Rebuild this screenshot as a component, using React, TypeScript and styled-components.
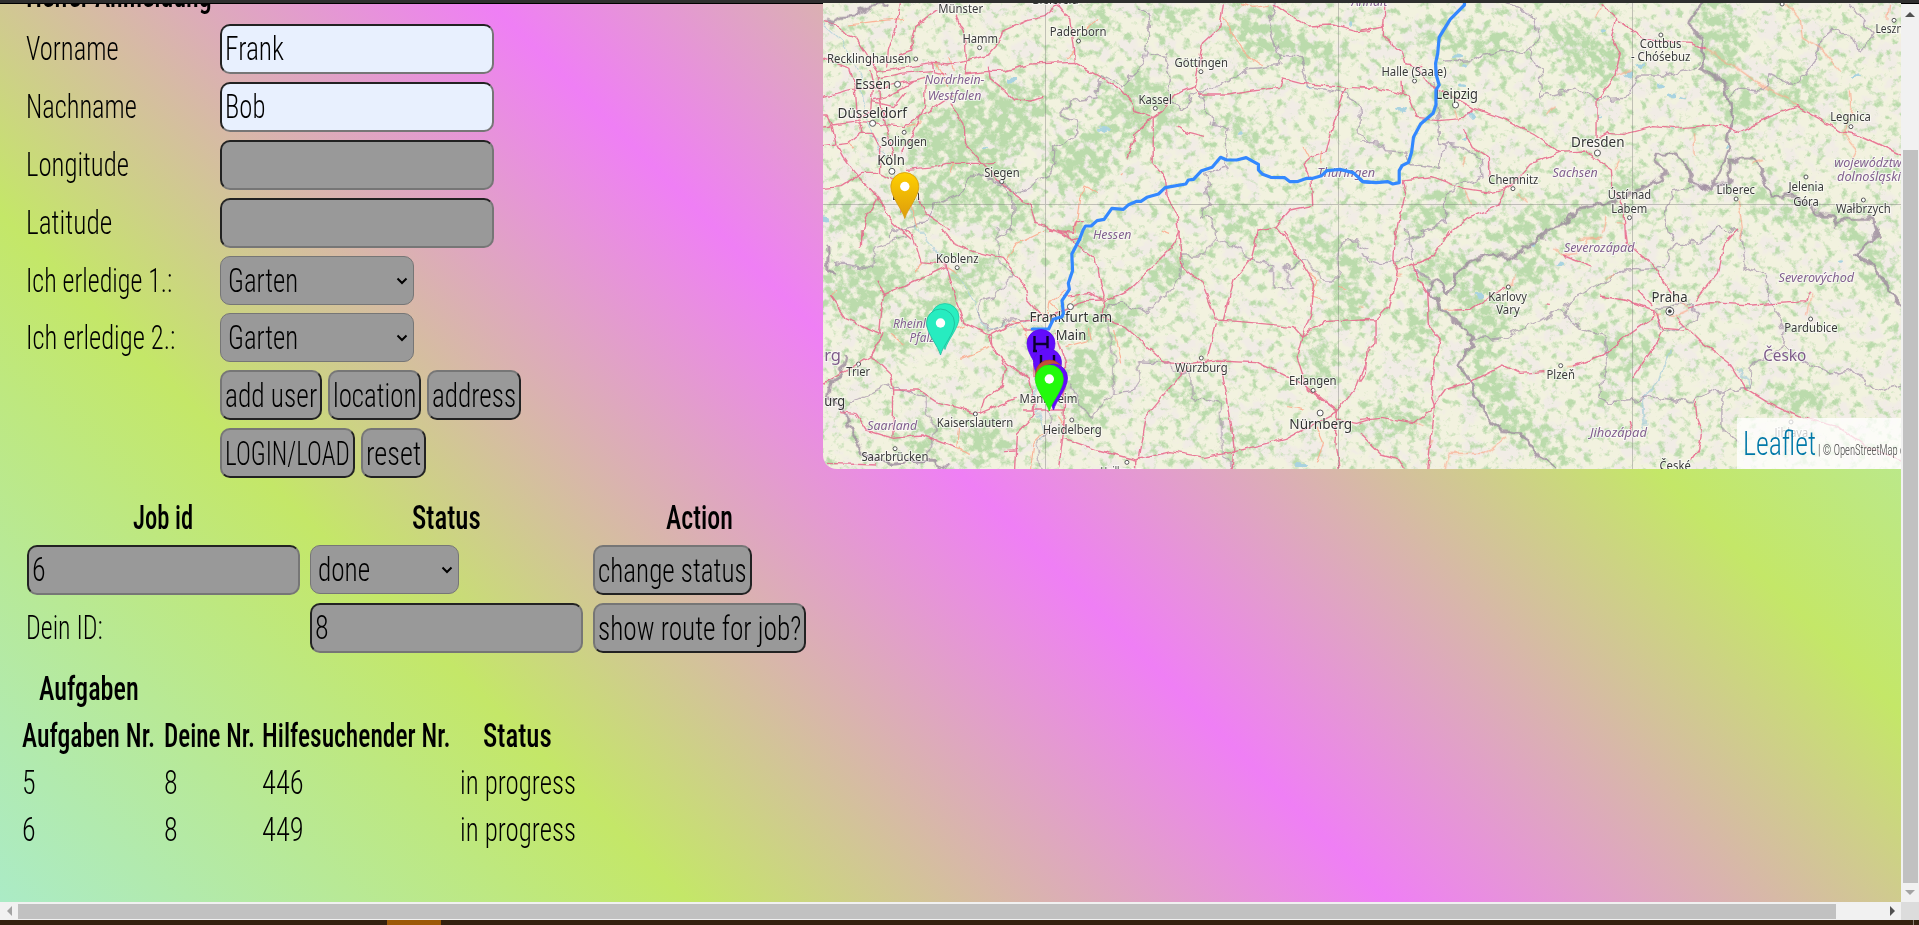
import React, { useLayoutEffect, useRef, useState } from "react";
import styled, { createGlobalStyle, css } from "styled-components";

const GlobalStyle = createGlobalStyle`
  * { box-sizing: border-box; }
  html, body { margin: 0; padding: 0; overflow: hidden; }
  body { font-family: Roboto, "Liberation Sans", sans-serif; color: #000; }
`;

/* ---------- condensed text ---------- */

const FitBox = styled.span<{ $w: number }>`
  display: inline-block;
  flex: none;
  width: ${(p) => p.$w}px;
  height: 40px;
  line-height: 38px;
  white-space: nowrap;
`;
const FitText = styled.span<{ $bold?: boolean; $size: number; $color?: string }>`
  display: inline-block;
  margin-left: -1px;
  transform-origin: 0 50%;
  font-size: ${(p) => p.$size}px;
  font-stretch: 75%;
  font-weight: ${(p) => (p.$bold ? 500 : 280)};
  color: ${(p) => p.$color ?? "#000"};
`;

type FitProps = { w: number; children: string; bold?: boolean; size?: number; color?: string };

function Fit({ w, children, bold, size = 34, color }: FitProps) {
  const ref = useRef<HTMLSpanElement>(null);
  const [scale, setScale] = useState(0.78);
  useLayoutEffect(() => {
    if (ref.current) setScale((w + 1) / ref.current.offsetWidth);
  }, [w, children]);
  return (
    <FitBox $w={w}>
      <FitText ref={ref} $bold={bold} $size={size} $color={color} style={{ transform: `scaleX(${scale})` }}>
        {children}
      </FitText>
    </FitBox>
  );
}

/* ---------- window ---------- */

const Window = styled.div`
  display: flex;
  flex-direction: column;
  width: 1919px;
  height: 925px;
  overflow: hidden;
`;
const TopEdge = styled.div`
  flex: none;
  height: 3px;
  background: #2f2f2f;
`;
const Body = styled.div`
  display: grid;
  flex: none;
  grid-template-columns: 1901px 18px;
  grid-template-rows: 899px 18px;
`;
const Page = styled.main`
  display: grid;
  grid-template-columns: 823px 1078px;
  align-items: start;
  overflow: hidden;
  background: linear-gradient(45deg, #abebc6, #c4e768 24.6%, #ef7ff5 49.6%, #c4e768 74.6%, #abebc6 99.6%);
`;
const TaskBar = styled.div`
  flex: 1;
  display: flex;
  background: #34210f;
  padding-left: 387px;
`;
const TaskItem = styled.div`
  width: 54px;
  background: #9c5807;
`;
const TaskEnd = styled.div`
  width: 1px;
  margin-left: 1472px;
  background: #8b7f74;
`;

const VBar = styled.div`
  display: flex;
  flex-direction: column;
  align-items: center;
  border-top: 1px solid #000;
  background: #f1f1f1;
`;
const HBar = styled.div`
  display: flex;
  align-items: center;
  background: #f1f1f1;
`;
const ArrowCell = styled.div<{ $size: number }>`
  display: flex;
  flex: none;
  align-items: center;
  justify-content: center;
  ${(p) => css`flex-basis: ${p.$size}px;`}
`;
const VThumb = styled.div`
  width: 15px;
  height: 733px;
  margin-top: 126px;
  background: #c1c1c1;
`;
const HThumb = styled.div`
  width: 1818px;
  height: 15px;
  margin-right: 47px;
  background: #c1c1c1;
`;
const Corner = styled.div`
  background: #dcdcdc;
`;

/* ---------- forms ---------- */

const Left = styled.section`
  border-top: 1px solid #000;
`;
const TitleClip = styled.div`
  display: flex;
  height: 20px;
  padding-left: 27px;
  overflow: hidden;
  ${FitBox} { margin-top: -28px; }
`;
const Form = styled.div`
  display: flex;
  flex-direction: column;
  gap: 8px;
  padding-left: 27px;
`;
const FormRow = styled.div`
  display: grid;
  grid-template-columns: 193px auto;
  align-items: center;
`;
const Buttons = styled.div`
  display: flex;
  grid-column: 2;
  gap: 6px;
`;
const Field = styled.div<{ $filled?: boolean; $w?: number }>`
  display: flex;
  align-items: center;
  width: ${(p) => p.$w ?? 273}px;
  height: 50px;
  padding-left: 4px;
  border: 2px solid;
  border-color: #222 #767676 #767676 #222;
  border-radius: 10px;
  background: ${(p) => (p.$filled ? "#e8f0fe" : "#999")};
`;
const Select = styled.div<{ $w: number }>`
  display: flex;
  align-items: center;
  justify-content: space-between;
  width: ${(p) => p.$w}px;
  height: 49px;
  padding: 0 5px 0 8px;
  border: 1px solid #767676;
  border-radius: 10px;
  background: #999;
`;
const Button = styled.button<{ $w: number }>`
  display: flex;
  align-items: center;
  justify-content: center;
  width: ${(p) => p.$w}px;
  height: 50px;
  padding: 1px 0 0;
  border: 2px solid;
  border-color: #767676 #222 #222 #767676;
  border-radius: 10px;
  background: #999;
  font-family: inherit;
`;
const Jobs = styled.div`
  display: grid;
  grid-template-columns: 273px 273px 213px;
  grid-template-rows: 39px 50px 50px;
  gap: 8px 10px;
  align-items: start;
  margin: 20px 0 0 27px;
`;
const HeadCell = styled.div`
  display: flex;
  justify-content: center;
`;
const LabelCell = styled.div`
  padding-top: 5px;
`;
const Tasks = styled.div`
  display: grid;
  grid-template-columns: 141.5px 98.5px 197.5px 114px;
  grid-auto-rows: 47px;
  align-items: center;
  margin-left: 23px;
`;
const TasksTitle = styled.div`
  display: flex;
  align-items: center;
  height: 47px;
  margin: 12px 0 0 40px;
`;

const Chevron = () => (
  <svg width="12" height="8" viewBox="0 0 12 8">
    <path d="M1.5 1.500 6 6l4.500-4.500" fill="none" stroke="#000" strokeWidth="2" />
  </svg>
);

/* ---------- map ---------- */

const MapPane = styled.div`
  position: relative;
  height: 466px;
  overflow: hidden;
  border-bottom-left-radius: 14px;
  background: #f2f2df;
`;
const MapSvg = styled.svg`
  display: block;
`;
const Attribution = styled.div`
  position: absolute;
  right: 0;
  bottom: 0;
  display: flex;
  align-items: flex-start;
  gap: 3px;
  width: 164px;
  height: 51px;
  padding: 6px 0 0 7px;
  overflow: hidden;
  background: rgba(255, 255, 255, 0.75);
`;
const Credit = styled.div`
  padding-top: 7px;
`;

type Zone = { x: number; y: number; sx: number; sy: number; roads: string; minor: string; thin: string; thick: string };

const zones: Record<string, Zone> = {
  A: {
    x: 820, y: 0, sx: 0.35075, sy: 0.33333,
    roads: "M9 65 45 75 75 105 105 115 135 165 150 190 165 215M165 215 260 200 325 190 365 195 420 182 480 165 505 135 520 95 590 62 640 50 680 15M320 188 325 215 360 225M165 235 230 220 320 212M410 222 470 215 530 213 600 192 725 187 800 230 850 262 890 310 895 335 950 352M229 10 215 90 195 150 190 200M338 28 270 80 262 120 265 150 225 165M385 50 405 95 415 130 417 180 412 222M680 15 715 60 725 140 728 190M9 175 85 205 100 260 105 330 120 400M9 290 90 268 180 262 300 232M150 300 190 290 240 262 270 240M150 305 210 320 240 280M9 345 20 345 35 380 45 430 65 470 100 520 165 595 200 660 260 718M9 378 115 365 150 368 240 380 330 320 380 285M9 440 80 430 115 400 150 400 170 440 170 520M165 215 170 300 190 385 210 470M142 210 150 250 145 330 100 360M370 310 410 370 415 430 460 485 500 530 560 590 600 620 615 670 700 705M245 508 330 500 360 490 460 490 500 487M9 565 60 560 120 520 170 520 205 540M165 595 130 660 118 718M230 640 235 600M480 200 485 235 520 265 555 300 600 303 640 292M300 240 298 320 270 390 230 460M280 590 300 640 370 690M1150 10 1140 80 1090 130 1080 190 1068 260 1010 285 975 335 950 352 900 400 885 450 872 478M950 352 950 490 985 540 990 590 1015 640 1025 718M1068 262 1080 285 1160 285 1240 272 1310 262 1320 237 1370 250 1500 262 1568 265M1290 10 1345 50 1390 78 1460 75 1530 95 1568 92M1500 262 1480 320 1455 400 1440 455 1400 470 1380 490 1400 540 1405 615 1340 630 1300 680 1250 690 1250 718M1300 680 1330 718M755 665 730 665 720 700 650 690M1020 378 1050 400 1095 412",
    minor: "M80 75 150 65 240 55M1150 50 1180 110 1215 165 1265 200M727 700 740 600 750 555 795 578M755 90 790 55M380 210 370 170M727 150 700 175M250 380 290 365M260 600 275 680M80 430 100 445M1380 440 1395 470M860 520 855 525M970 690 995 700M1430 450 1425 490M1200 10 1240 22 1280 15M265 590 250 560M375 520 380 490M330 190 350 225 370 260",
    thin: "M910 20 940 50 945 80 925 160 985 165 1000 230 995 290 1030 330 1060 290 1085 280 1110 360 1165 385 1160 470 1160 500M925 160 915 210 890 230 860 260 800 230 790 290 720 300 685 345 735 360 735 400 670 440 665 500 630 545 560 580 500 540 440 520 400 580 320 620 300 665 230 680 190 718M1085 280 1150 250 1220 210 1300 200 1310 165 1370 170 1395 260 1500 280 1540 330 1540 400 1568 430M1160 500 1100 520 1110 600 1080 650 1120 660 1130 718M500 540 550 600 550 690 510 715M1300 10 1280 60 1310 165",
    thick: "M9 60 40 68 60 50 100 45 150 20 190 10",
  },
  B: {
    x: 1360, y: 0, sx: 0.3565, sy: 0.33333,
    roads: "M70 10 65 110 120 160 130 195 175 200M160 200 200 260 260 290 320 325M0 90 70 78M0 262 50 265 120 283 135 285 160 355 220 362 290 355 320 325 400 355 490 405 560 457 630 453 705 510 710 570 740 620 745 718M675 10 720 60 705 110 730 160 715 230 665 300 665 410M720 60 800 120 930 127 965 148M670 412 690 400 740 403 820 380 880 385 1010 373 1060 397 1150 350 1225 320 1350 395 1400 405 1518 465M560 457 480 490 440 540 410 565 370 577 290 565 200 530 120 540 130 580 115 640 100 718M290 385 315 440 360 470 362 530M410 560 385 620 300 655 230 718M118 245 120 283M1035 718 1060 690",
    minor: "M965 148 1040 190 1130 260 1205 295 1225 320M1195 10 1235 60 1240 110 1310 160 1345 215M1375 268 1380 330 1355 400 1395 450 1380 480M1060 600 1072 680 1065 718M935 400 940 470M545 320 520 348M290 565 310 610M440 580 470 610M715 510 730 478M690 650 680 700M265 330 275 360M1480 60 1485 10M295 470 285 500M720 230 760 210M660 50 680 10M720 670 745 672M610 718 670 715M1130 480 1100 490",
    thin: "M410 10 490 50 500 120 470 155 400 150 350 165 305 185 230 190M470 155 505 200 510 290 600 265 670 300 745 295 780 225 860 225 950 200M210 240 225 430 290 440 340 480 345 530 240 575 240 660 180 700 130 718M0 425 60 430 80 455 130 460 145 495 220 505 235 430M1030 300 1070 265 1130 275 1150 225 1220 260 1280 180 1290 120 1330 85 1410 145 1440 100 1370 10M985 565 930 562 880 575 850 650 875 718M970 718 1010 680 1060 700",
    thick: "M955 10 920 65 965 125 960 200 1025 250 1045 350 1030 450 1010 510 985 570 935 550 910 490 890 465 830 460 825 485 860 520 765 580 680 615 610 630 575 675 520 690 515 718M985 548 1035 545 1035 480 1115 480 1150 585 1220 590 1290 640 1330 645 1335 680 1360 655 1440 655 1455 718",
  },
  C: {
    x: 820, y: 230, sx: 0.35075, sy: 0.33333,
    roads: "M120 0 118 50M240 0 260 10 285 95 330 100 360 105 385 200 410 280 490 320 495 360 545 410 595 445 610 520 605 560 560 610 555 718M350 0 380 40 440 65 520 85 580 160 590 210 640 270M30 195 75 265 170 310 180 195 280 150 360 110M165 155 185 195M180 310 145 375 200 430 210 480 280 480 330 515 455 550 555 505M10 460 80 420 145 375M455 550 465 505 520 470 530 410 480 320 560 275 620 270M55 545 100 550 130 600 210 625 290 615 390 655M210 480 208 620M690 10 785 90 810 200 800 260 870 290 980 395 1060 400 1130 390 1240 395 1380 465 1475 545 1530 470 1568 360M700 5 710 30 740 25M810 215 880 180 1000 55 1025 0M650 255 700 240 760 212 810 210M1025 0 1035 110 1090 160 1130 270 1200 275 1350 290 1375 320 1360 380 1390 480 1475 545M1130 280 1105 380M1250 0 1230 85 1180 150 1150 270M1320 0 1380 110 1410 160 1400 250 1375 320 1440 275 1568 265M1050 410 930 560 910 690M1140 395 1155 470 1170 560 1180 650 1175 718M580 300 610 300 610 440 690 430M670 310 700 400 695 600 680 718M695 540 580 540M695 625 790 660 900 690 1000 665 1100 682 1180 665 1330 625 1475 545M1475 545 1468 640 1480 718M1475 570 1530 580 1568 568M900 690 900 718M20 700 160 705M690 200 770 190 805 210M555 660 525 662",
    minor: "M400 385 490 350M840 300 860 400M1395 130 1420 150 1400 200 1430 210M530 90 560 40 640 0M640 250 600 265M1335 530 1380 540M1415 590 1435 640 1415 700M30 200 45 180M395 590 390 655 430 670M700 350 770 330 765 300M545 270 570 280 600 330M655 215 680 240M650 250 655 220 700 180M600 718 610 640 650 600M700 590 680 560M240 345 200 310M370 300 410 285M390 130 360 110M275 130 290 95M720 215 740 190M1480 170 1500 180",
    thin: "M45 100 150 115 155 55 250 20M505 0 510 90 550 130 500 200 460 210 450 250 480 300 560 265 600 275M80 520 190 465 300 500 310 560 330 600 310 680M1035 75 1100 75 1130 20 1200 60 1220 90 1290 110 1290 170 1350 180 1320 110 1390 95 1430 150 1480 150 1480 40 1530 35 1568 60M1035 75 1030 140 960 220 930 245 860 220 810 235 830 340 840 390 835 490 770 560 740 520 715 460M835 490 900 480 910 430 900 395 1000 400 1005 430 1060 420 1060 500 1140 520 1150 680 1180 718M630 718 620 640 660 600 655 540",
    thick: "M20 50 20 120 45 130M75 375 60 430 30 460 25 500 75 555 95 620 130 680 200 700 320 690 360 718",
  },
  D: {
    x: 1360, y: 230, sx: 0.3565, sy: 0.33333,
    roads: "M100 0 95 90 105 130 80 230 45 270 45 340 20 360 15 430 0 455M250 0 210 75 105 120M150 95 165 150 190 190 195 290 225 330 205 420 200 500 210 530 190 718M0 268 45 270M0 568 60 562 150 578 195 545 240 480 310 455 400 405 450 430 520 425M0 610 60 675 110 690 125 718M600 408 680 375 740 325 820 265 825 240 740 210 675 198M265 240 310 238 350 210 410 170M745 0 750 40 820 105 875 190M1060 0 1020 50 1005 130 940 215M920 235 980 218 1100 225 1250 215 1262 185M825 245 850 295 910 300M850 300 830 345 765 445M890 265 960 340 1040 405 1080 475 1140 515 1230 560 1340 590 1420 650 1518 690M780 180 820 225M940 510 945 560 960 600 950 660 930 690M570 75 650 108M520 218 535 220M755 570 765 610",
    minor: "M545 50 570 75 610 70 640 30 680 25M435 130 430 165 410 170M235 718 250 670 350 670 410 620M1270 190 1255 250M600 408 580 410M870 265 920 240M820 260 845 258M710 135 690 150M885 210 920 230M100 140 120 135M155 578 175 590M205 630 190 660M0 230 10 232M1209 560 1215 575M235 235 265 240",
    thin: "M150 120 195 150M0 75 50 95 150 90 130 0M320 330 400 320 500 275 560 235 620 290 685 320 690 390 670 500 700 520 810 500 930 515 970 480 1015 490 1015 600 1060 640M570 260 600 200 750 120 850 115 885 40 950 45 1000 0M1070 0 1080 110 1140 140 1150 210 1190 300 1185 350 1095 410 1090 470 1015 490M1185 350 1250 400 1320 435 1380 420 1450 485 1518 465M830 230 840 290 880 305 940 270 945 235 880 225 830 230",
    thick: "M520 0 490 40 455 50 440 85 370 70 310 95 265 140 250 195 215 150 190 160 225 235 320 320 280 405 310 460 350 560 400 605 450 610 500 680 550 718M1455 0 1390 75 1440 110 1518 230",
  },
};

type Kind = "town" | "city" | "region" | "country";
const labels: [string, number, number, number, string, Kind][] = [
  ["A", 337, 465, 40, "Münster", "town"], ["A", 406, 508, 129, "Hamm", "town"], ["A", 655, 817, 109, "Paderborn", "town"],
  ["A", 20, 260, 188, "Recklinghausen", "town"], ["A", 100, 202, 267, "Essen", "city"], ["A", 50, 248, 353, "Düsseldorf", "city"],
  ["A", 174, 305, 437, "Solingen", "town"], ["A", 163, 242, 495, "Köln", "city"], ["A", 468, 569, 531, "Siegen", "town"],
  ["A", 908, 1003, 312, "Kassel", "town"], ["A", 1011, 1163, 202, "Göttingen", "town"], ["A", 298, 469, 253, "Nordrhein-", "region"],
  ["A", 307, 460, 299, "Westfalen", "region"], ["A", 1418, 1583, 530, "Thüringen", "region"], ["A", 778, 888, 718, "Hessen", "region"],
  ["A", 605, 737, 11, "Bielefeld", "town"], ["A", 205, 285, 600, "Bonn", "city"], ["A", 1515, 1618, 18, "Anhalt", "region"],
  ["B", 60, 243, 228, "Halle (Saale)", "town"], ["B", 212, 331, 296, "Leipzig", "city"], ["B", 592, 742, 440, "Dresden", "city"],
  ["B", 360, 500, 551, "Chemnitz", "town"], ["B", 540, 667, 530, "Sachsen", "region"], ["B", 785, 902, 143, "Cottbus", "town"],
  ["B", 760, 927, 184, "- Chóśebuz", "town"], ["B", 1446, 1540, 98, "Leszno", "town"], ["B", 1319, 1433, 364, "Legnica", "town"],
  ["B", 1330, 1540, 500, "województwo", "region"], ["B", 1338, 1535, 543, "dolnośląskie", "region"], ["B", 1202, 1301, 574, "Jelenia", "town"],
  ["B", 1215, 1287, 617, "Góra", "town"], ["B", 1335, 1489, 640, "Wałbrzych", "town"], ["B", 1000, 1108, 583, "Liberec", "town"],
  ["B", 695, 817, 596, "Ústí nad", "town"], ["B", 705, 806, 638, "Labem", "town"],
  ["C", 331, 452, 98, "Koblenz", "town"], ["C", 208, 372, 293, "Rheinland-", "region"], ["C", 255, 327, 337, "Pfalz", "region"],
  ["C", 597, 833, 276, "Frankfurt am", "city"], ["C", 672, 759, 329, "Main", "city"], ["C", 75, 143, 439, "Trier", "town"],
  ["C", 569, 734, 518, "Mannheim", "town"], ["C", 333, 551, 591, "Kaiserslautern", "town"], ["C", 635, 803, 611, "Heidelberg", "town"],
  ["C", 135, 277, 600, "Saarland", "region"], ["C", 118, 309, 694, "Saarbrücken", "town"], ["C", 1012, 1162, 425, "Würzburg", "town"],
  ["C", 1337, 1473, 466, "Erlangen", "town"], ["C", 1338, 1517, 597, "Nürnberg", "city"], ["C", 12, 60, 392, "rg", "country"],
  ["C", 12, 72, 528, "urg", "city"], ["C", 800, 920, 737, "Heilbronn", "town"],
  ["D", 360, 468, 213, "Karlovy", "town"], ["D", 382, 448, 253, "Vary", "town"], ["D", 523, 603, 446, "Plzeň", "town"],
  ["D", 818, 919, 216, "Praha", "city"], ["D", 572, 770, 67, "Severozápad", "region"], ["D", 1174, 1386, 155, "Severovýchod", "region"],
  ["D", 1190, 1340, 305, "Pardubice", "town"], ["D", 1131, 1252, 393, "Česko", "country"], ["D", 645, 805, 622, "Jihozápad", "region"],
  ["D", 840, 928, 720, "České", "town"], ["D", 1163, 1257, 620, "Jihlava", "town"],
];
const kindStyle: Record<Kind, { size: number; fill: string; italic?: boolean }> = {
  town: { size: 12.3, fill: "#3a3a3a" },
  city: { size: 14.3, fill: "#333" },
  region: { size: 13, fill: "#82608e", italic: true },
  country: { size: 16, fill: "#7d5a89" },
};

const dots: [string, number, number, number][] = [
  ["A", 455, 143, 2], ["A", 737, 123, 2], ["A", 273, 177, 2], ["A", 221, 253, 3], ["A", 150, 370, 3], ["A", 240, 397, 2], ["A", 205, 514, 3],
  ["A", 518, 545, 2], ["A", 956, 325, 2], ["A", 1086, 215, 2], ["B", 153, 243, 2], ["B", 268, 315, 3], ["B", 666, 459, 3], ["B", 429, 566, 2],
  ["B", 844, 105, 2], ["B", 1498, 61, 2], ["B", 1184, 12, 2], ["B", 1377, 380, 2], ["B", 1251, 531, 2], ["B", 1412, 600, 2], ["B", 1055, 597, 2],
  ["B", 756, 653, 2], ["C", 391, 113, 2], ["C", 714, 230, 3], ["C", 110, 402, 2], ["C", 443, 552, 2], ["C", 718, 570, 2], ["C", 214, 656, 2],
  ["C", 1087, 384, 2], ["C", 1406, 481, 2], ["C", 1426, 549, 3], ["C", 875, 697, 2], ["D", 416, 171, 2], ["D", 563, 407, 2],
  ["D", 869, 244, 4], ["D", 1264, 267, 2], ["D", 1209, 576, 2],
];

/* cx, cy, rx, ry, rotation of the wooded areas */
const woods: [number, number, number, number, number][] = [
  [975, 130, 75, 32, -15], [1015, 95, 40, 12, -5], [1255, 35, 28, 26, 25], [1300, 50, 45, 14, 12], [1170, 15, 20, 14, 0], [1095, 25, 14, 25, 0],
  [1140, 110, 40, 35, 10], [1245, 130, 40, 10, 35], [1080, 160, 35, 30, 0], [960, 190, 60, 25, -20], [1010, 215, 30, 15, 0], [865, 285, 45, 30, -30],
  [960, 285, 55, 14, -35], [905, 330, 50, 14, -30], [985, 440, 26, 24, 0], [925, 440, 20, 16, 0], [1085, 385, 22, 42, 0], [1110, 320, 30, 24, 0],
  [1170, 270, 25, 20, 0], [1245, 225, 50, 12, 35], [1330, 250, 45, 12, 30], [1195, 395, 35, 10, 20], [1350, 300, 20, 26, 0], [1440, 100, 18, 14, 0],
  [1490, 45, 30, 16, -5], [1570, 40, 26, 20, 0], [1435, 210, 40, 15, -25], [1530, 225, 50, 15, -25], [1590, 215, 40, 10, -20], [1625, 180, 22, 10, -20],
  [1745, 110, 22, 20, 0], [1800, 90, 25, 16, 0], [1720, 45, 22, 50, 0], [1780, 205, 45, 12, 25], [1860, 240, 45, 9, 45], [1530, 270, 22, 18, -30],
  [1440, 270, 30, 16, 0], [1480, 310, 20, 50, -15], [1420, 330, 20, 20, 0], [1500, 400, 18, 50, -35], [1640, 355, 32, 10, -40], [1610, 340, 14, 18, 0],
  [1605, 395, 12, 16, 0], [1540, 440, 40, 12, 35], [1395, 420, 35, 16, 0], [1320, 360, 14, 25, 0], [1600, 60, 30, 20, 0], [1880, 280, 20, 14, 0],
  [1800, 400, 30, 14, 0], [860, 215, 30, 18, 0], [1080, 240, 24, 16, 0], [1020, 370, 8, 20, 0], [1240, 445, 20, 12, 0], [1440, 35, 24, 14, 0],
];
const lakes: [number, number, number][] = [
  [1012, 81, 4], [1104, 130, 5], [1456, 57, 4], [1464, 66, 3], [1402, 108, 5], [1640, 65, 4], [1628, 76, 4], [1660, 85, 4], [1672, 95, 4], [1725, 146, 3],
  [1683, 98, 3], [1605, 30, 3], [1841, 263, 3], [1560, 266, 4], [1478, 296, 4], [1534, 245, 3], [1300, 465, 5], [1350, 22, 3], [1856, 75, 3],
  [1470, 115, 3], [1465, 140, 3], [1462, 85, 3], [1673, 126, 2], [985, 147, 3], [825, 220, 4], [1240, 134, 3], [1310, 88, 2], [1600, 115, 2],
];

function RoadLayer({ kind, color, width, opacity }: { kind: "roads" | "minor" | "thin" | "thick"; color: string; width: number; opacity: number }) {
  return (
    <g fill="none" stroke={color} strokeWidth={width} opacity={opacity} strokeLinejoin="round">
      {Object.entries(zones).map(([id, z]) => (
        <path key={id} d={z[kind]} transform={`translate(${z.x} ${z.y}) scale(${z.sx} ${z.sy})`} vectorEffect="non-scaling-stroke" />
      ))}
    </g>
  );
}

function Pin({ x, y, fill, edge, hole, h }: { x: number; y: number; fill: string; edge: string; hole?: boolean; h?: boolean }) {
  return (
    <g transform={`translate(${x} ${y})`}>
      <path d="M0 46.500C-2.500 37-14 25-14 14.500A14 14 0 0 1 14 14.500C14 25 2.500 37 0 46.500Z" fill={fill} stroke={edge} strokeWidth="0.8" />
      {hole && <circle cy="14.500" r="4.700" fill="#fff" />}
      {h && <path d="M-6.500 7v15M6.500 7v15M-6.500 15h13M-8 22h4M5 22h4" stroke="#0a0030" strokeWidth="2.400" fill="none" />}
    </g>
  );
}

function MapView() {
  return (
    <MapSvg width="1078" height="466" viewBox="823 3 1078 466">
      <defs>
        <filter id="woods" filterUnits="userSpaceOnUse" x="823" y="3" width="1078" height="466" colorInterpolationFilters="sRGB">
          <feTurbulence type="fractalNoise" baseFrequency="0.12" numOctaves="5" seed="7" />
          <feColorMatrix values="0 0 0 0 0  0 0 0 0 0  0 0 0 0 0  1 0 0 0 0" result="n" />
          <feGaussianBlur in="SourceAlpha" stdDeviation="8" result="b" />
          <feComposite in="b" in2="n" operator="arithmetic" k2="0.22" k3="1" />
          <feComponentTransfer result="m"><feFuncA type="linear" slope="4.500" intercept="-2.400" /></feComponentTransfer>
          <feFlood floodColor="#bbdbac" />
          <feComposite in2="m" operator="in" />
        </filter>
        <filter id="fields" filterUnits="userSpaceOnUse" x="823" y="3" width="1078" height="466" colorInterpolationFilters="sRGB">
          <feTurbulence type="fractalNoise" baseFrequency="0.05" numOctaves="5" seed="21" />
          <feColorMatrix values="0 0 0 0 .945  0 0 0 0 .925  0 0 0 0 .9  0 6 0 0 -2.900" />
        </filter>
        <filter id="wobble" filterUnits="userSpaceOnUse" x="823" y="3" width="1078" height="466">
          <feTurbulence type="fractalNoise" baseFrequency="0.09" numOctaves="2" seed="3" />
          <feDisplacementMap in="SourceGraphic" scale="6" xChannelSelector="R" yChannelSelector="G" />
        </filter>
        <filter id="crinkle" filterUnits="userSpaceOnUse" x="823" y="3" width="1078" height="466">
          <feTurbulence type="fractalNoise" baseFrequency="0.09" numOctaves="2" seed="5" />
          <feDisplacementMap in="SourceGraphic" scale="12" xChannelSelector="R" yChannelSelector="G" />
        </filter>
        <linearGradient id="gold" x1="0" y1="0" x2="0" y2="1">
          <stop offset="0" stopColor="#ffd000" />
          <stop offset="1" stopColor="#dd9c0c" />
        </linearGradient>
      </defs>
      <rect x="823" y="3" width="1078" height="466" filter="url(#fields)" />
      <g filter="url(#woods)">
        {woods.map(([cx, cy, rx, ry, r], i) => (
          <ellipse key={i} cx={cx} cy={cy} rx={rx} ry={ry} transform={`rotate(${r} ${cx} ${cy})`} />
        ))}
      </g>
      <g fill="#a9d3e0" filter="url(#crinkle)">
        {lakes.map(([x, y, r], i) => <ellipse key={i} cx={x} cy={y} rx={r} ry={r * 0.6} />)}
      </g>
      <g filter="url(#crinkle)">
        <path d="M823 25 845 45 860 75 862 100 870 130 890 165 905 200 925 240 950 270 965 285 985 328 1040 320M1040 330 1035 400 1045 440" fill="none" stroke="#aacfdc" strokeWidth="1.200" opacity=".7" />
        <path d="M1670 350 1660 380 1642 400 1645 430M1740 370 1748 385" fill="none" stroke="#aacfdc" strokeWidth="2" opacity=".7" />
        <RoadLayer kind="thin" color="#a28fa8" width={1.5} opacity={0.68} />
        <RoadLayer kind="thick" color="#9c8a9d" width={3} opacity={0.8} />
      </g>
      <g filter="url(#wobble)">
        <RoadLayer kind="minor" color="#fca98c" width={1.2} opacity={0.85} />
        <RoadLayer kind="roads" color="#e8658a" width={1.4} opacity={0.85} />
      </g>
      <path d="M1045.500 3V469M1338.500 3V469M1632.500 3V469M823 204.500H1901" stroke="#777" strokeWidth="1" opacity=".4" />
      <g fill="#fff" stroke="#555" strokeWidth="1">
        {dots.map(([id, x, y, r], i) => (
          <circle key={i} cx={zones[id].x + x * zones[id].sx} cy={zones[id].y + y * zones[id].sy} r={r} />
        ))}
        <circle cx="1669.800" cy="311.300" r="1.500" fill="#333" />
      </g>
      <g fontFamily='"Noto Sans", sans-serif' stroke="#fff" strokeOpacity=".65" strokeWidth="2" paintOrder="stroke">
        {labels.map(([id, x1, x2, y, text, kind]) => {
          const z = zones[id];
          const s = kindStyle[kind];
          return (
            <text
              key={id + text}
              x={z.x + x1 * z.sx}
              y={z.y + y * z.sy}
              textLength={(x2 - x1) * z.sx}
              lengthAdjust="spacingAndGlyphs"
              fontSize={s.size}
              fill={s.fill}
              fontStyle={s.italic ? "italic" : undefined}
            >
              {text}
            </text>
          );
        })}
      </g>
      <g fill="none" stroke="#3388ff" strokeWidth="3.200" strokeLinecap="round" strokeLinejoin="round">
        <path vectorEffect="non-scaling-stroke" transform="translate(1360 0) scale(.3565 .33333)" d="M293 0 293 15 253 58 222 112 218 160 212 190 214 225 222 255 213 270 213 315 205 340 170 372 150 412 145 455 136 487 118 497 110 512 110 548 92 552 78 545 45 548 8 545 0 538" />
        <path vectorEffect="non-scaling-stroke" transform="translate(820 0) scale(.35075 .33333)" d="M1568 547 1548 545 1520 518 1482 508 1445 512 1430 527 1405 535 1388 535 1360 545 1340 545 1325 533 1285 532 1262 523 1250 510 1250 493 1215 473 1188 480 1160 480 1142 472 1118 502 1088 512 1065 538 1050 540 1043 552 984 563 965 582 932 592 915 604 903 604 880 614 865 628 832 625 810 658 790 662 773 678 757 678 750 690 740 718" />
        <path vectorEffect="non-scaling-stroke" transform="translate(820 230) scale(.35075 .33333)" d="M740 28 718 72 720 122 708 160 711 178 690 212 694 250 690 260 665 268 652 297 605 297" />
      </g>
      <Pin x={904.8} y={172} fill="url(#gold)" edge="#d59a10" hole />
      <Pin x={945} y={303} fill="#28efc0" edge="#1fc9a2" />
      <Pin x={940.5} y={308.500} fill="#27ecc0" edge="#20b898" hole />
      <Pin x={1041} y={329} fill="#620cfb" edge="#5a0be8" h />
      <Pin x={1047.5} y={348} fill="#620cfb" edge="#5a0be8" h />
      <Pin x={1049.5} y={359.500} fill="#c24e38" edge="#a8402e" />
      <Pin x={1053.5} y={363.500} fill="#620cfb" edge="#5a0be8" />
      <Pin x={1049.3} y={364.500} fill="#22fa0c" edge="#1ee80a" hole />
    </MapSvg>
  );
}

/* ---------- app ---------- */

const fields: { label: string; lw: number; value?: string; vw?: number }[] = [
  { label: "Vorname", lw: 92, value: "Frank", vw: 58 },
  { label: "Nachname", lw: 110, value: "Bob", vw: 39 },
  { label: "Longitude", lw: 102 },
  { label: "Latitude", lw: 85 },
];
const skills = [
  { label: "Ich erledige 1.:", lw: 145 },
  { label: "Ich erledige 2.:", lw: 148 },
];
const tasks = [
  ["5", "8", "446", "in progress"],
  ["6", "8", "449", "in progress"],
];
const taskWidths = [13, 13, 41, 115];

export default function App() {
  return (
    <>
      <GlobalStyle />
      <Window>
        <TopEdge />
        <Body>
          <Page>
            <Left>
              <TitleClip><Fit w={185} bold>Helfer Anmeldung</Fit></TitleClip>
              <Form>
                {fields.map((f) => (
                  <FormRow key={f.label}>
                    <Fit w={f.lw}>{f.label}</Fit>
                    <Field $w={274} $filled={!!f.value}>{f.value && <Fit w={f.vw ?? 40}>{f.value}</Fit>}</Field>
                  </FormRow>
                ))}
                {skills.map((s) => (
                  <FormRow key={s.label}>
                    <Fit w={s.lw}>{s.label}</Fit>
                    <Select $w={194}><Fit w={69}>Garten</Fit><Chevron /></Select>
                  </FormRow>
                ))}
                <FormRow>
                  <Buttons>
                    <Button $w={102}><Fit w={91}>add user</Fit></Button>
                    <Button $w={93}><Fit w={82}>location</Fit></Button>
                    <Button $w={94}><Fit w={83}>address</Fit></Button>
                  </Buttons>
                </FormRow>
                <FormRow>
                  <Buttons>
                    <Button $w={135}><Fit w={124}>LOGIN/LOAD</Fit></Button>
                    <Button $w={65}><Fit w={54}>reset</Fit></Button>
                  </Buttons>
                </FormRow>
              </Form>
              <Jobs>
                <HeadCell><Fit w={59} bold>Job id</Fit></HeadCell>
                <HeadCell><Fit w={68} bold>Status</Fit></HeadCell>
                <HeadCell><Fit w={66} bold>Action</Fit></HeadCell>
                <Field><Fit w={13}>6</Fit></Field>
                <Select $w={149}><Fit w={51}>done</Fit><Chevron /></Select>
                <Button $w={159}><Fit w={148}>change status</Fit></Button>
                <LabelCell><Fit w={76}>Dein ID:</Fit></LabelCell>
                <Field><Fit w={13}>8</Fit></Field>
                <Button $w={213}><Fit w={202}>show route for job?</Fit></Button>
              </Jobs>
              <TasksTitle><Fit w={99} bold>Aufgaben</Fit></TasksTitle>
              <Tasks>
                <Fit w={132} bold>Aufgaben Nr.</Fit>
                <Fit w={90} bold>Deine Nr.</Fit>
                <Fit w={188} bold>Hilfesuchender Nr.</Fit>
                <HeadCell><Fit w={68} bold>Status</Fit></HeadCell>
                {tasks.map((row, r) => row.map((c, i) => <Fit key={r + "-" + i} w={taskWidths[i]}>{c}</Fit>))}
              </Tasks>
            </Left>
            <MapPane>
              <MapView />
              <Attribution>
                <Fit w={72} color="#0078a8">Leaflet</Fit>
                <Credit><Fit w={131} size={14} color="#444">| © OpenStreetMap contributors</Fit></Credit>
              </Attribution>
            </MapPane>
          </Page>
          <VBar>
            <ArrowCell $size={20}><svg width="10" height="5"><path d="M0 5 5 0l5 5z" fill="#505050" /></svg></ArrowCell>
            <VThumb />
            <ArrowCell $size={18}><svg width="10" height="5"><path d="M0 0h10L5 5z" fill="#a3a3a3" /></svg></ArrowCell>
          </VBar>
          <HBar>
            <ArrowCell $size={18}><svg width="5" height="10"><path d="M5 0v10L0 5z" fill="#a3a3a3" /></svg></ArrowCell>
            <HThumb />
            <ArrowCell $size={18}><svg width="5" height="10"><path d="M0 0v10l5-5z" fill="#505050" /></svg></ArrowCell>
          </HBar>
          <Corner />
        </Body>
        <TaskBar><TaskItem /><TaskEnd /></TaskBar>
      </Window>
    </>
  );
}
